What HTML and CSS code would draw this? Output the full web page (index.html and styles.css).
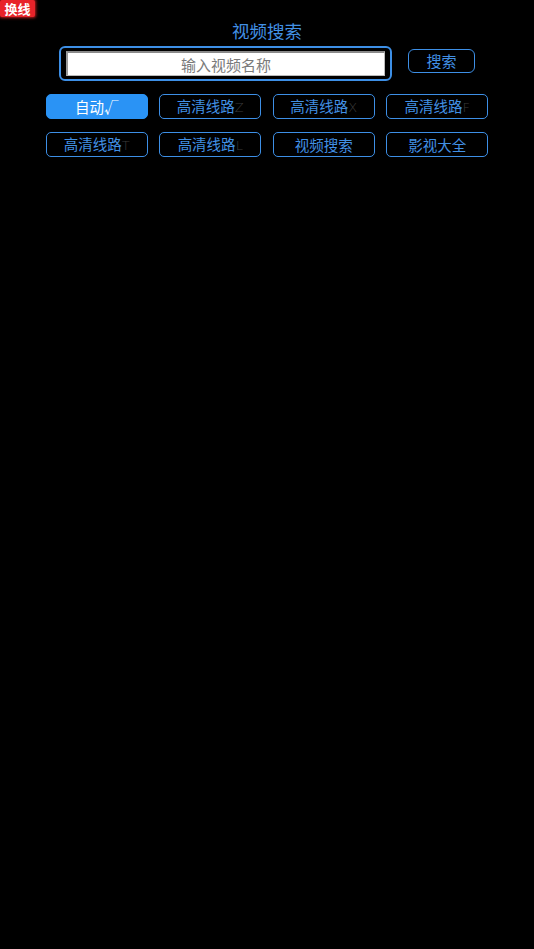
FILE: index.html
```html
<!DOCTYPE html>
<html lang="zh">
<head>
<meta charset="utf-8">
<title>视频搜索</title>
<link rel="stylesheet" href="styles.css">
</head>
<body>
<div class="badge">换线</div>
<main class="page">
  <h1 class="title">视频搜索</h1>
  <div class="search-row">
    <div class="search-box">
      <input class="search-input" type="text" placeholder="输入视频名称">
    </div>
    <button class="search-btn">搜索</button>
  </div>
  <div class="lines">
    <button class="line active">自动√</button>
    <button class="line">高清线路<span class="tag">Z</span></button>
    <button class="line">高清线路<span class="tag">X</span></button>
    <button class="line">高清线路<span class="tag">F</span></button>
    <button class="line">高清线路<span class="tag">T</span></button>
    <button class="line">高清线路<span class="tag">L</span></button>
    <button class="line">视频搜索</button>
    <button class="line">影视大全</button>
  </div>
</main>
</body>
</html>
```

FILE: styles.css
```css
html, body {
  margin: 0;
  padding: 0;
  background: #000;
  height: 100%;
}
body {
  font-family: "Noto Sans CJK SC", "Noto Sans", sans-serif;
  color: #4290e4;
}
.badge {
  position: absolute;
  left: 0;
  top: 0;
  width: 35px;
  height: 17px;
  background: #e8232a;
  color: #fff;
  font-size: 13px;
  font-weight: bold;
  line-height: 17px;
  text-align: center;
  border-radius: 2px;
  box-shadow: 0 0 3px 1px rgba(255, 40, 40, 0.7);
}
.page {
  display: flex;
  flex-direction: column;
  align-items: center;
  padding-top: 19px;
}
.title {
  margin: 0;
  font-size: 17.5px;
  font-weight: normal;
  line-height: 23px;
  color: #4290e4;
}
.search-row {
  display: flex;
  align-items: flex-start;
  gap: 16px;
  margin-top: 4px;
}
.search-box {
  box-sizing: border-box;
  width: 333px;
  height: 35px;
  border: 2px solid #3d8fe6;
  border-radius: 6px;
  padding: 3px 5px;
}
.search-input {
  display: block;
  width: 100%;
  height: 25px;
  box-sizing: border-box;
  margin: 0;
  border: 1px solid #bbb;
  border-top: 2px solid #8a8a8a;
  border-left: 2px solid #9a9a9a;
  background: #fff;
  text-align: center;
  font-family: inherit;
  font-size: 15px;
  color: #555;
  padding: 0;
  outline: none;
}
.search-input::placeholder {
  color: #7a7a7a;
}
.search-btn {
  margin-top: 3px;
  width: 67px;
  height: 24px;
  border: 1.5px solid #3d8fe6;
  border-radius: 6px;
  background: #000;
  color: #4290e4;
  font-family: inherit;
  font-size: 15px;
  line-height: 20px;
  padding: 0;
}
.lines {
  display: grid;
  grid-template-columns: repeat(4, 102px);
  column-gap: 11.5px;
  row-gap: 13px;
  margin-top: 13px;
}
.line {
  height: 25px;
  border: 1.5px solid #3d8fe6;
  border-radius: 5px;
  background: #000;
  color: #4290e4;
  font-family: inherit;
  font-size: 14.5px;
  line-height: 20px;
  padding: 0;
  white-space: nowrap;
}
.line.active {
  background: #2a93f5;
  border-color: #2a93f5;
  color: #fff;
}
.tag {
  color: #3c3c3c;
  font-family: "DejaVu Sans", sans-serif;
  font-weight: 200;
  font-size: 13px;
}
```
